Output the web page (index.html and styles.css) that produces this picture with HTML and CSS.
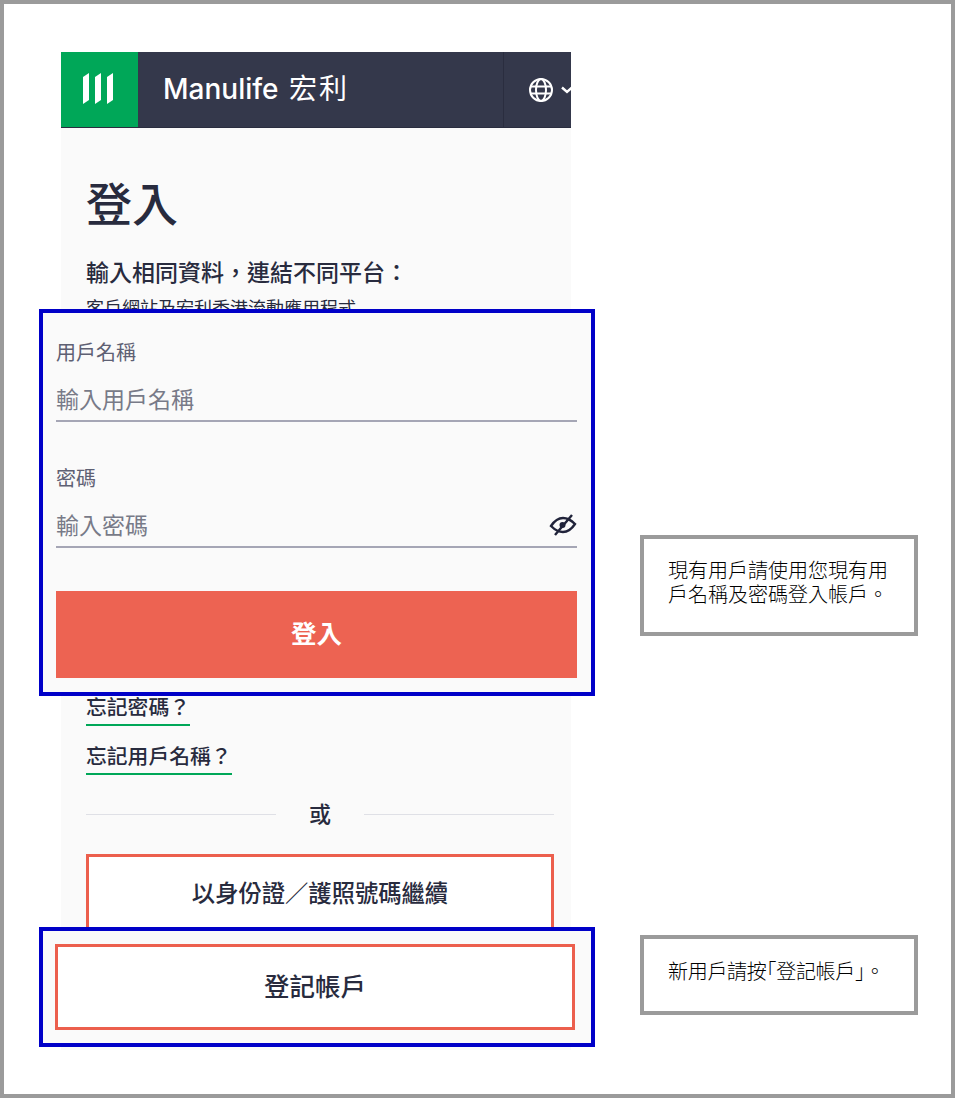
FILE: index.html
```html
<!DOCTYPE html>
<html lang="zh-Hant">
<head>
    <meta charset="utf-8">
    <title>登入</title>
    <link rel="stylesheet" href="styles.css">
</head>
<body>
    <div class="frame">
        <div class="phone">
            <div class="topbar">
                <div class="logo-box">
                    <svg class="logo" width="32" height="32" viewBox="0 0 32 32"><path d="M1 5 L7 1 V28 L1 32 Z M13 5 L19 1 V28 L13 32 Z M25 5 L31 1 V28 L25 32 Z" fill="#fff"/></svg>
                </div>
                <div class="brand">Manulife <span class="brand-zh">宏利</span></div>
                <div class="lang">
                    <svg width="26" height="26" viewBox="0 0 26 26" fill="none" stroke="#fff" stroke-width="2"><circle cx="13" cy="13" r="11"/><ellipse cx="13" cy="13" rx="5" ry="11"/><path d="M2 9.500 H24 M2 16.500 H24"/></svg>
                    <svg width="12" height="8" viewBox="0 0 12 8" fill="none" stroke="#fff" stroke-width="2.400"><path d="M1 1.500 L6 6 L11 1.500"/></svg>
                </div>
            </div>
            <div class="content">
                <h1>登入</h1>
                <p class="sub">輸入相同資料，連結不同平台：</p>
                <p class="desc">客戶網站及宏利香港流動應用程式</p>
                <div class="links">
                    <a class="link">忘記密碼？</a>
                    <a class="link">忘記用戶名稱？</a>
                </div>
                <div class="divider"><span>或</span></div>
                <button class="btn-outline btn-id">以身份證／護照號碼繼續</button>
            </div>
        </div>

        <div class="highlight highlight-form">
            <div class="field">
                <label>用戶名稱</label>
                <div class="input">輸入用戶名稱</div>
            </div>
            <div class="field">
                <label>密碼</label>
                <div class="input">輸入密碼
                    <svg class="eye" width="28" height="24" viewBox="0 0 28 24" fill="none" stroke="#20233a" stroke-width="2.400"><path d="M2 13 C6 7 10 5 14 5 C18 5 22 7 26 11 C22 17 18 19 14 19 C10 19 6 17 2 13 Z"/><circle cx="13.500" cy="12" r="3" fill="#20233a" stroke="none"/><path d="M6 22 L23 2"/></svg>
                </div>
            </div>
            <button class="btn-login">登入</button>
        </div>

        <div class="highlight highlight-register">
            <button class="btn-outline btn-register">登記帳戶</button>
        </div>

        <div class="note note-login">現有用戶請使用您現有用戶名稱及密碼登入帳戶。</div>
        <div class="note note-register">新用戶請按<span class="half">「</span>登記帳戶<span class="half">」</span>。</div>
    </div>
</body>
</html>
```

FILE: styles.css
```css
* {
    box-sizing: border-box;
}
body {
    margin: 0;
    background-color: #fff;
    font-family: "Noto Sans CJK TC", "Noto Sans", sans-serif;
    color: #282b3e;
}
.frame {
    position: relative;
    width: 955px;
    height: 1098px;
    border: 4px solid #9b9b9b;
    padding: 48px 0 0 57px;
    overflow: hidden;
}
.phone {
    width: 510px;
    height: 998px;
    background-color: #fafafa;
    overflow: hidden;
}
.topbar {
    display: flex;
    align-items: center;
    height: 76px;
    background-color: #34384b;
    border-bottom: 1px solid #2a2d3f;
}
.logo-box {
    display: flex;
    align-items: center;
    justify-content: center;
    width: 77px;
    height: 100%;
    background-color: #00a758;
}
.logo {
    margin: 0 3px 3px 0;
}
.brand {
    flex: 1;
    padding: 0 0 5px 25px;
    font-family: "Inter", sans-serif;
    font-size: 28px;
    font-weight: 500;
    color: #fff;
}
.brand-zh {
    margin-left: 3px;
    font-family: "Noto Sans CJK TC", sans-serif;
    font-size: 28px;
    font-weight: 400;
    letter-spacing: 2px;
}
.lang {
    display: flex;
    align-items: center;
    gap: 7px;
    width: 68px;
    height: 100%;
    padding-left: 24px;
    border-left: 1px solid #2a2d3f;
    overflow: hidden;
}
.lang svg {
    flex-shrink: 0;
}
.content {
    padding: 39px 17px 0 25px;
}
h1 {
    margin: 0;
    font-size: 46px;
    line-height: 68px;
    font-weight: 500;
}
.sub {
    margin: 19px 0 0;
    font-size: 23px;
    line-height: 34px;
    font-weight: 500;
}
.desc {
    margin: 6px 0 0;
    font-size: 18px;
    line-height: 26px;
}
.links {
    display: flex;
    flex-direction: column;
    align-items: flex-start;
    gap: 14px;
    margin-top: 371px;
}
.link {
    font-size: 20.800px;
    line-height: 31px;
    font-weight: 500;
    padding-bottom: 2px;
    border-bottom: 2px solid #00a758;
}
.divider {
    display: flex;
    align-items: center;
    justify-content: center;
    gap: 33px;
    margin-top: 22px;
    font-size: 22px;
    line-height: 30px;
    font-weight: 500;
}
.divider span {
    padding-bottom: 4px;
}
.divider::before,
.divider::after {
    content: "";
    flex: 1;
    height: 1px;
    background-color: #dfe0e6;
}
.btn-outline {
    display: block;
    width: 100%;
    background-color: #fff;
    border: 3px solid #ec5f4d;
    font-family: inherit;
    font-weight: 500;
    color: #282b3e;
}
.btn-id {
    height: 86px;
    margin-top: 23px;
    font-size: 23.300px;
    padding: 0 0 10px;
}
.highlight {
    position: absolute;
    left: 35px;
    width: 556px;
    background-color: #fafafa;
    border: 4px solid #0000c8;
    padding: 0 14px 0 13px;
}
.highlight-form {
    top: 305px;
    height: 387px;
    padding-top: 24px;
}
.highlight-register {
    top: 923px;
    height: 120px;
    padding: 13px 16px 0 12px;
}
.field {
    margin-bottom: 41px;
}
.field label {
    display: block;
    font-size: 20px;
    line-height: 30px;
    color: #5e6073;
}
.input {
    display: flex;
    align-items: center;
    justify-content: space-between;
    height: 47px;
    margin-top: 8px;
    border-bottom: 2px solid #a5a6b5;
    font-size: 23px;
    color: #787a88;
}
.eye {
    flex-shrink: 0;
    margin-top: 2px;
}
.btn-login {
    display: block;
    width: 100%;
    height: 87px;
    margin-top: 43px;
    padding: 0 0 6px;
    background-color: #ed6352;
    border: none;
    font-family: inherit;
    font-size: 25.500px;
    font-weight: 700;
    color: #fff;
}
.btn-register {
    height: 86px;
    padding: 0 0 5px;
    font-size: 25.500px;
}
.note {
    position: absolute;
    left: 636px;
    width: 278px;
    background-color: #fff;
    border: 4px solid #9b9b9b;
    padding: 19px 20px 0 24px;
    font-size: 20px;
    line-height: 24px;
    font-weight: 300;
    color: #000;
}
.note-login {
    top: 531px;
    height: 101px;
}
.note-register {
    top: 931px;
    height: 80px;
    padding-top: 20px;
    white-space: nowrap;
    letter-spacing: -0.300px;
}
.half {
    font-feature-settings: "halt";
}
```
